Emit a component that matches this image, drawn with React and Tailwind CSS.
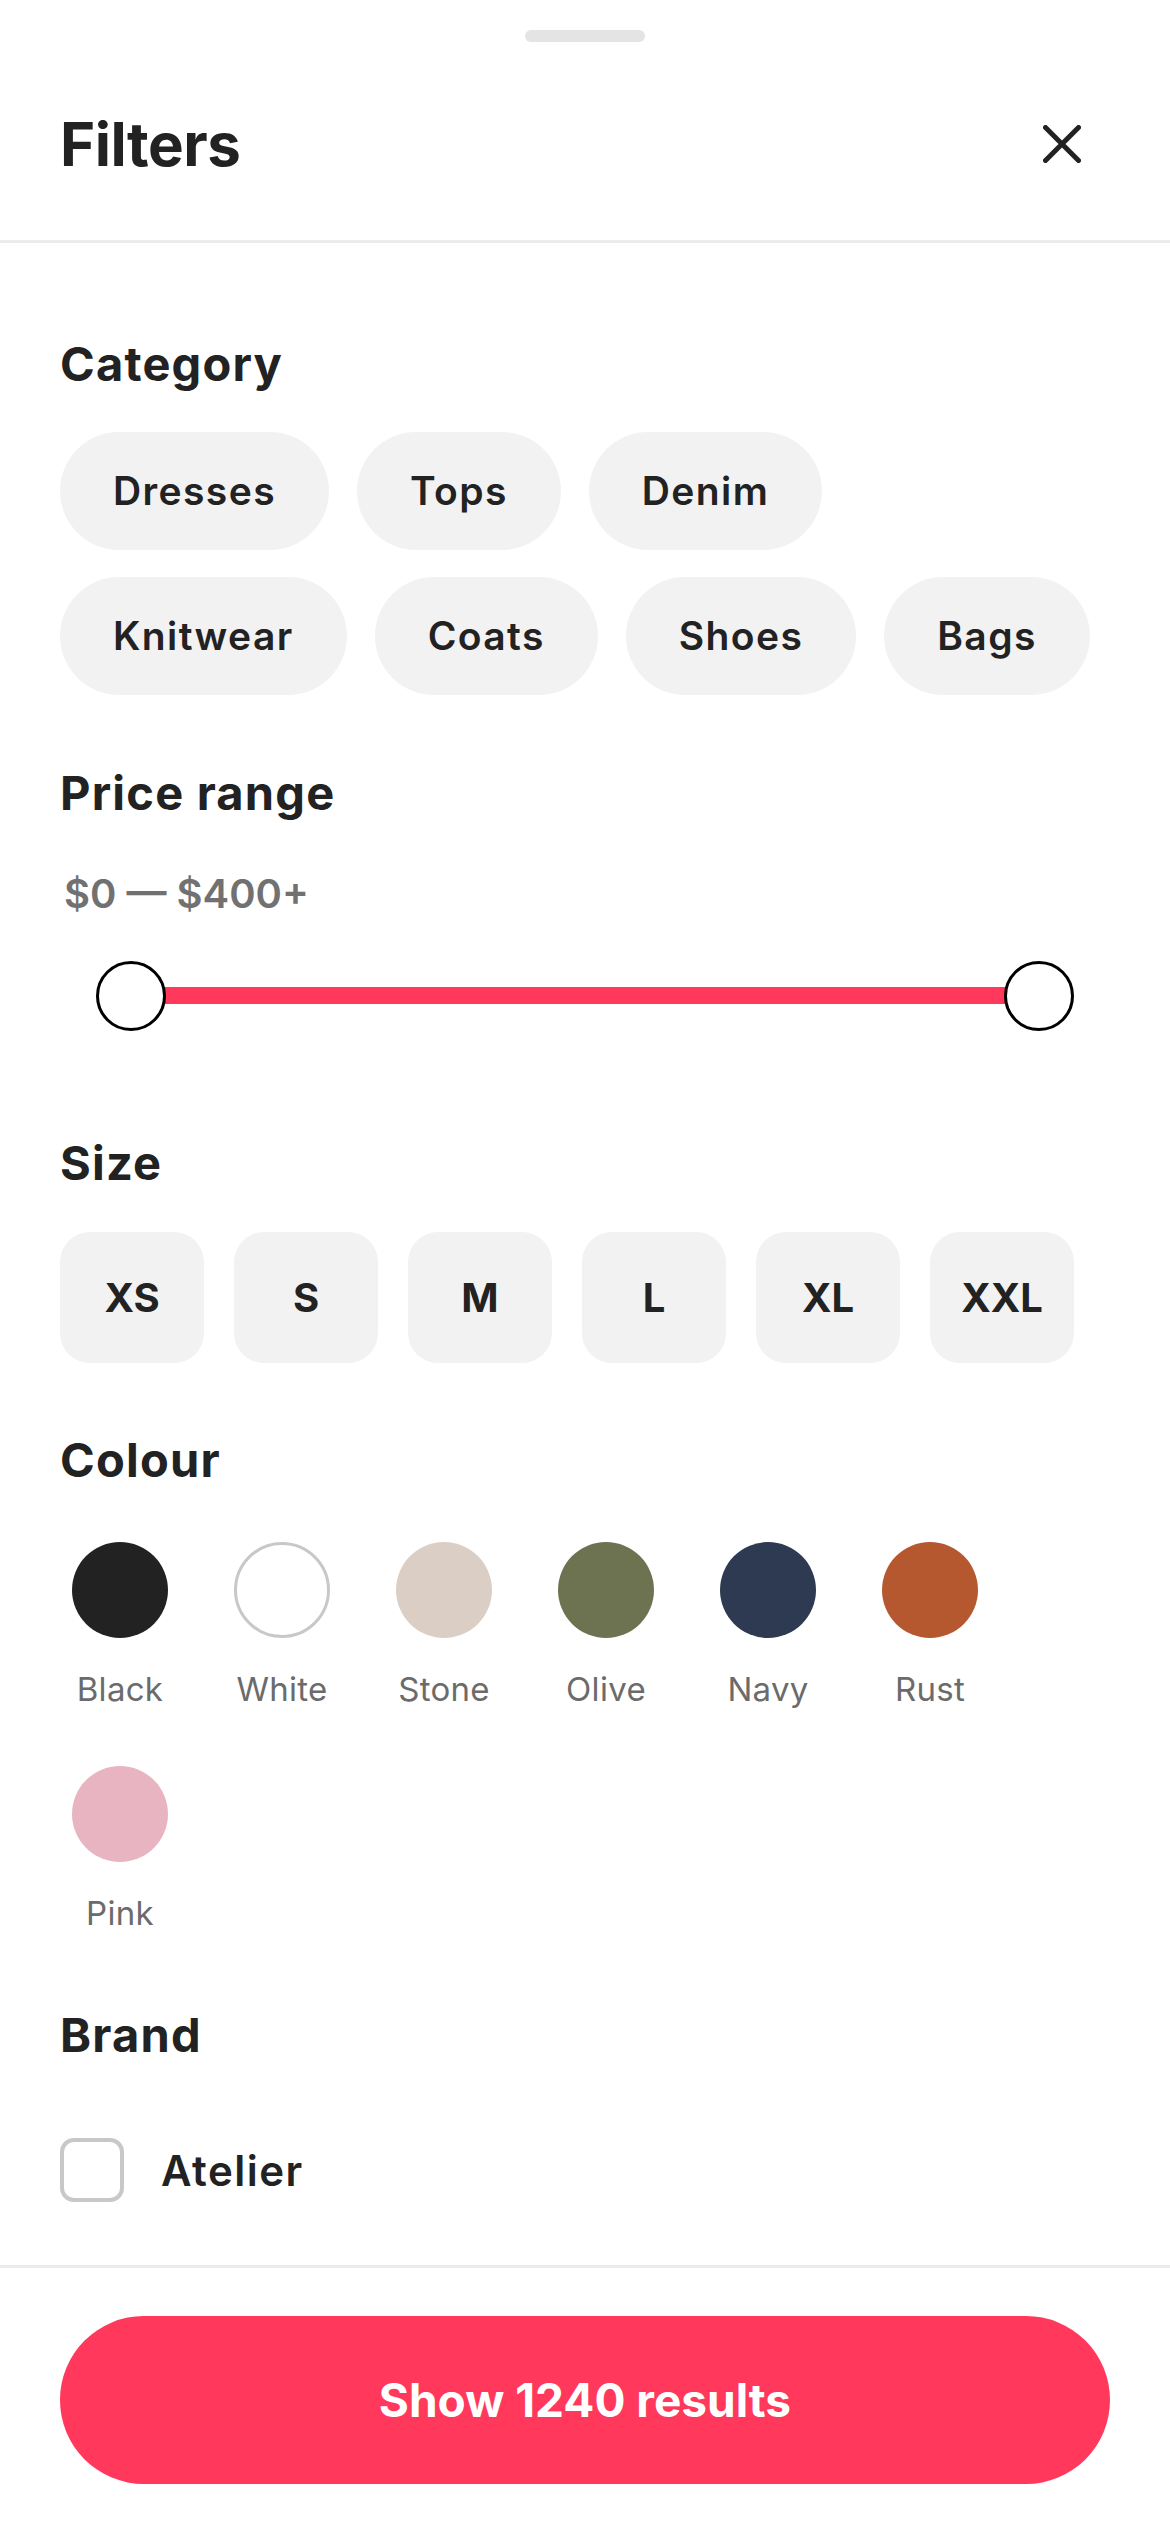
import { useState } from 'react';

const categories = [
  ['Dresses', 'Tops', 'Denim'],
  ['Knitwear', 'Coats', 'Shoes', 'Bags'],
];

const sizes = ['XS', 'S', 'M', 'L', 'XL', 'XXL'];

const colours = [
  { name: 'Black', cls: 'bg-[#222222]' },
  { name: 'White', cls: 'bg-white border-[3px] border-[#c8c8c8]' },
  { name: 'Stone', cls: 'bg-[#dbcfc5]' },
  { name: 'Olive', cls: 'bg-[#6d7350]' },
  { name: 'Navy', cls: 'bg-[#2e3a52]' },
  { name: 'Rust', cls: 'bg-[#b5582f]' },
  { name: 'Pink', cls: 'bg-[#e9b4c1]' },
];

function Heading({ children, className = '' }) {
  return (
    <h2 className={`text-[47px] leading-[55px] font-bold text-[#222222] tracking-[1.2px] ${className}`}>
      {children}
    </h2>
  );
}

function App() {
  const [checked, setChecked] = useState(false);

  return (
    <div
      className="flex flex-col h-[2532px] w-[1170px] bg-white overflow-hidden"
      style={{ fontFamily: 'Inter, "Noto Sans", sans-serif' }}
    >
      {/* header */}
      <div className="h-[243px] border-b-[3px] border-[#ebebeb] flex flex-col">
        <div className="pt-[30px] flex justify-center">
          <div className="w-[120px] h-[12px] rounded-full bg-[#e4e4e4]"></div>
        </div>
        <div className="flex items-center justify-between pl-[60px] pr-[72px] mt-[66px]">
          <h1 className="text-[60px] leading-[72px] font-bold text-[#222222] tracking-[-0.5px]">Filters</h1>
          <button className="w-[72px] h-[72px] flex items-center justify-center">
            <svg width="38" height="38" viewBox="0 0 38 38" fill="none">
              <path d="M2.5 2.5L35.5 35.5M35.5 2.5L2.5 35.5" stroke="#222222" strokeWidth="5" strokeLinecap="round" />
            </svg>
          </button>
        </div>
      </div>

      {/* content */}
      <div className="flex-1 overflow-hidden px-[60px] pt-[93px]">
        <Heading>Category</Heading>
        <div className="mt-[41px] flex flex-col gap-[27px]">
          {categories.map((row, i) => (
            <div key={i} className="flex gap-[28px]">
              {row.map((c) => (
                <button
                  key={c}
                  className="h-[118px] px-[53px] rounded-full bg-[#f2f2f2] text-[39px] font-semibold tracking-[1.4px] text-[#222222]"
                >
                  {c}
                </button>
              ))}
            </div>
          ))}
        </div>

        <Heading className="mt-[70px]">Price range</Heading>
        <p className="mt-[50px] ml-[4px] text-[40px] leading-[48px] font-semibold text-[#717171]">$0 — $400+</p>
        <div className="relative mt-[43px] mx-[36px] h-[70px]">
          <div className="absolute left-[35px] right-[35px] top-[26px] h-[17px] bg-[#ff385c]"></div>
          <div className="absolute left-0 top-0 w-[70px] h-[70px] rounded-full bg-white border-[3px] border-black"></div>
          <div className="absolute right-0 top-0 w-[70px] h-[70px] rounded-full bg-white border-[3px] border-black"></div>
        </div>

        <Heading className="mt-[104px]">Size</Heading>
        <div className="mt-[42px] flex gap-[30px]">
          {sizes.map((s) => (
            <button
              key={s}
              className="w-[144px] h-[131px] rounded-[30px] bg-[#f2f2f2] text-[40px] font-bold text-[#222222] flex items-center justify-center"
            >
              {s}
            </button>
          ))}
        </div>

        <Heading className="mt-[69px]">Colour</Heading>
        <div className="mt-[55px] flex flex-wrap gap-x-[42px] gap-y-[57px] w-[1000px]">
          {colours.map((c) => (
            <div key={c.name} className="w-[120px] flex flex-col items-center">
              <div className={`w-[96px] h-[96px] rounded-full ${c.cls}`}></div>
              <span className="mt-[31px] text-[33px] leading-[40px] tracking-[0.3px] text-[#6b6b6b]">{c.name}</span>
            </div>
          ))}
        </div>

        <Heading className="mt-[74px]">Brand</Heading>
        <label className="mt-[76px] flex items-center gap-[37px]" onClick={() => setChecked(!checked)}>
          <span className="w-[64px] h-[64px] rounded-[14px] border-[4px] border-[#c8c8c8] bg-white"></span>
          <span className="text-[42px] font-semibold tracking-[1.5px] text-[#222222]">Atelier</span>
        </label>
      </div>

      {/* footer */}
      <div className="border-t-[3px] border-[#ebebeb] px-[60px] pt-[48px] pb-[48px]">
        <button className="w-full h-[168px] rounded-full bg-[#ff385c] text-white text-[46px] font-bold">
          Show 1240 results
        </button>
      </div>
    </div>
  );
}

export default App;
